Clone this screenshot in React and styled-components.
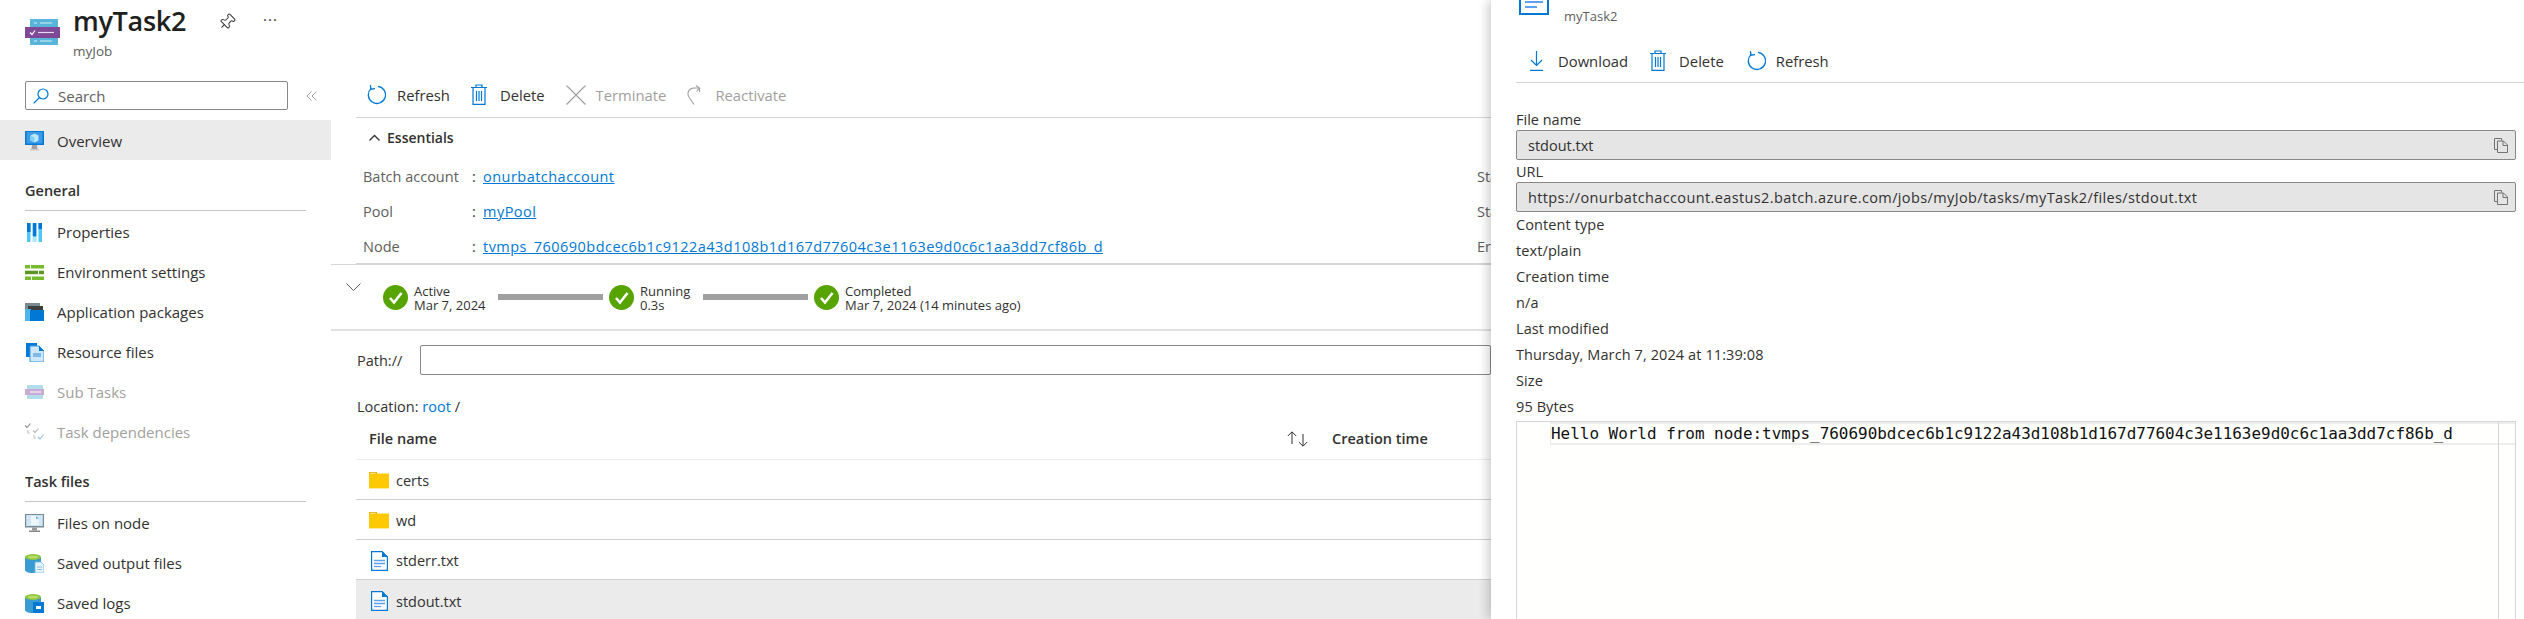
import React from "react";
import styled, { createGlobalStyle } from "styled-components";
import { Pin } from "lucide-react";

const FONT = `"Open Sans", "Noto Sans", Arial, sans-serif`;
const BLUE = "#0078d4";
const TEXT = "#323130";
const MUTED = "#605e5c";
const DISABLED = "#a19f9d";

const Global = createGlobalStyle`
  html, body { margin: 0; padding: 0; width: 2524px; height: 619px; overflow: hidden; background: #fff; }
  body { font-family: ${FONT}; color: ${TEXT}; font-size: 15px; }
  #root { width: 100%; height: 100%; }
  * { box-sizing: border-box; }
`;

const Page = styled.div`display: flex; width: 2524px; height: 619px; overflow: hidden;`;
const Blade = styled.div`flex: 1; min-width: 0; display: flex; flex-direction: column; overflow: hidden;`;
const Header = styled.header`height: 70px; flex: none; display: flex; padding: 0 0 0 25px; align-items: flex-start;`;
const HeaderLogo = styled.div`width: 48px; padding-top: 19px; flex: none;`;
const TitleBlock = styled.div`display: flex; flex-direction: column; width: 145px;`;
const Title = styled.h1`margin: 0; font-size: 27px; line-height: 40px; height: 40px; margin-top: 1px; font-weight: 600; color: #201f1e; white-space: nowrap; letter-spacing: -0.3px;`;
const Subtitle = styled.div`font-size: 13.5px; line-height: 20px; color: ${MUTED};`;
const HeaderAction = styled.div`display: flex; align-items: center; gap: 24px; padding-top: 12px; height: 32px; color: ${TEXT};`;
const Dots = styled.span`font-size: 15px; letter-spacing: 1px; line-height: 20px; margin-top: -6px; margin-left: 3px;`;
const Body = styled.div`flex: 1; display: flex; min-height: 0;`;

const Sidebar = styled.nav`width: 331px; flex: none; display: flex; flex-direction: column;`;
const SearchRow = styled.div`flex: none; display: flex; align-items: center; margin: 11px 0 10px 25px; gap: 18px;`;
const SearchBox = styled.div`width: 263px; height: 29px; border: 1px solid #8a8886; border-radius: 2px; display: flex; align-items: center; padding-left: 7px; gap: 9px; color: ${MUTED}; font-size: 15px;`;
const NavRow = styled.div`
  height: 40px; flex: none; display: flex; align-items: center; padding: ${p => (p.$active ? "1px" : 0)} 0 0 25px; gap: 13px; font-size: 15px; white-space: nowrap;
  background: ${p => (p.$active ? "#ebebeb" : "transparent")};
  color: ${p => (p.$disabled ? DISABLED : TEXT)};
  margin-bottom: ${p => (p.$active ? "1px" : 0)};
`;
const NavIcon = styled.span`width: 19px; height: 20px; display: flex; align-items: center; justify-content: center; flex: none;`;
const SectionHead = styled.div`
  flex: none; margin: 19px 25px 1px 25px; height: 31px; border-bottom: 1px solid #c8c6c4; font-weight: 600; font-size: 14.5px; line-height: 22px; color: ${TEXT};
`;

const Main = styled.main`flex: 1; min-width: 0; display: flex; flex-direction: column; overflow: hidden;`;
const Toolbar = styled.div`
  flex: none; height: 48px; margin-left: 25px; padding-left: 10px; border-bottom: 1px solid #d6d6d6; display: flex; align-items: center; gap: 21px;
  padding-top: 6px; padding-bottom: 4px;
`;
const ToolButton = styled.div`display: flex; align-items: center; gap: ${p => p.$gap ?? 11}px; font-size: 14.8px; color: ${p => (p.$disabled ? DISABLED : TEXT)}; white-space: nowrap;`;
const EssentialsHead = styled.div`flex: none; height: 38px; margin-left: 38px; display: flex; align-items: center; gap: 7px; font-weight: 600; font-size: 14px;`;
const Essentials = styled.div`
  flex: none; margin-left: 25px; height: 108px; border-bottom: 1px solid #d6d6d6; display: grid; grid-template-columns: 1114px 200px; padding: 3px 0 0 7px; grid-auto-rows: 35px;
`;
const Pair = styled.div`display: flex; align-items: center; font-size: 14.5px; color: ${MUTED}; white-space: nowrap;`;
const PairLabel = styled.span`width: 109px; flex: none;`;
const Colon = styled.span`width: 11px; flex: none; color: ${TEXT};`;
const LinkText = styled.a`color: ${BLUE}; text-decoration: underline; letter-spacing: 0.47px;`;
const Stepper = styled.div`flex: none; height: 67px; border-top: 1px solid #d6d6d6; border-bottom: 2px solid #e1e1e1; display: flex; align-items: center; padding-left: 15px;`;
const Chevron = styled.span`width: 37px; margin-top: -20px; display: flex; flex: none;`;
const Step = styled.div`display: flex; align-items: center; gap: 6px;`;
const StepText = styled.div`font-size: 13px; line-height: 14px; margin-top: 2px; color: ${TEXT}; white-space: nowrap; width: ${p => p.$w}px;`;
const Connector = styled.div`width: 105px; height: 6px; background: #a0a0a0; flex: none; margin-right: 6px;`;
const PathRow = styled.div`flex: none; display: flex; align-items: center; margin: 14px 0 0 26px; gap: 18px; font-size: 14.5px;`;
const PathInput = styled.div`flex: 1; height: 30px; border: 1px solid #8a8886; border-radius: 2px;`;
const Location = styled.div`flex: none; margin: 21px 0 0 26px; font-size: 14.5px; line-height: 22px;`;
const RootLink = styled.span`color: ${BLUE};`;
const Table = styled.div`flex: none; margin: 0 0 0 25px; display: flex; flex-direction: column;`;
const TableHead = styled.div`height: 42px; flex: none; display: flex; align-items: center; padding-left: 13px; border-bottom: 1px solid #edebe9; font-weight: 600; font-size: 14.5px;`;
const HeadName = styled.span`flex: 1;`;
const SortBox = styled.span`display: flex; margin-right: 24px;`;
const HeadTime = styled.span`width: 159px; white-space: nowrap;`;
const FileRow = styled.div`
  height: 40px; flex: none; display: flex; align-items: center; gap: 7px; padding: 2px 0 0 13px; font-size: 14.5px;
  border-bottom: ${p => (p.$last ? "none" : "1px solid #d2d0ce")};
  background: ${p => (p.$selected ? "#ebebeb" : "#fff")};
`;
const FileIconBox = styled.span`width: 20px; display: flex; justify-content: center; flex: none;`;

const Panel = styled.aside`
  width: 1033px; flex: none; position: relative; z-index: 2; background: #fff; box-shadow: -3px 0 10px rgba(0,0,0,.2);
  padding: 0 8px 0 25px; display: flex; flex-direction: column;
`;
const PanelHead = styled.div`height: 28px; flex: none; display: flex; align-items: flex-start; padding-left: 3px; gap: 15px;`;
const PanelSub = styled.div`font-size: 13px; line-height: 20px; color: ${MUTED}; margin-top: 6px;`;
const PanelToolbar = styled.div`flex: none; height: 55px; margin-right: -8px; border-bottom: 1px solid #d6d6d6; display: flex; align-items: center; padding: 11px 0 0 14px; gap: 22px;`;
const Label = styled.div`flex: none; font-size: 14.5px; line-height: 20px; padding-top: 2px; height: 22px; white-space: nowrap; margin-top: ${p => p.$top ?? 0}px;`;
const ReadOnly = styled.div`
  height: 30px; flex: none; display: flex; align-items: center; justify-content: space-between; background: #e5e5e5; border: 1px solid #8a8886; border-radius: 2px; padding: 0 7px 0 11px; font-size: 14.5px; letter-spacing: ${p => p.$spacing ?? 0}px;
`;
const Info = styled.div`flex: none; font-size: 14.5px; line-height: 26px; height: 26px; white-space: nowrap; letter-spacing: 0.1px;`;
const Editor = styled.div`
  flex: 1; min-height: 0; margin-top: 1px; position: relative; border: 1px solid #d6d6d6; border-bottom: none; background: #fffffe; padding: 0 0 0 33px;
`;
const CurrentLine = styled.div`
  height: 23px; border: 2px solid #eeeeee; border-right: none; border-left-width: 1px; font-family: "DejaVu Sans Mono", "Liberation Mono", monospace; font-size: 15.94px; line-height: 19px; color: #111; white-space: pre;
`;
const Ruler = styled.div`position: absolute; top: 0; bottom: 0; right: 16px; width: 1px; background: #d4d4d4;`;

const Refresh = ({ c = BLUE }) => (
  <svg width="20" height="21" viewBox="0 0 20 21" fill="none" stroke={c} strokeWidth="1.3">
    <path d="M12 2.3A8.6 8.6 0 1 1 5 4.6" />
    <path d="M4.4 1.2 5 5.2 9 4.6" />
  </svg>
);
const Trash = () => (
  <svg width="16" height="21" viewBox="0 0 16 21" fill="none" stroke={BLUE} strokeWidth="1.2">
    <path d="M0 3.5h16M5 3.5V1h6v2.5M2 3.5v16.8h12V3.5" />
    <path d="M5.5 7v10M8 7v10M10.5 7v10" />
  </svg>
);
const Terminate = () => (
  <svg width="20" height="20" viewBox="0 0 20 20" fill="none" stroke={DISABLED} strokeWidth="1.1"><path d="M0.5 0.5 19.5 19.5M19.5 0.5 0.5 19.5" /></svg>
);
const Reactivate = () => (
  <svg width="15" height="20" viewBox="0 0 15 20" fill="none" stroke={DISABLED} strokeWidth="1.1">
    <path d="M12 3H7C2 3 -0.5 8 2 12L7 19.5" /><path d="M9 0.5 12.5 3 9.5 6.5" /><path d="M12.5 3v4" />
  </svg>
);
const Download = () => (
  <svg width="13" height="20" viewBox="0 0 13 20" fill="none" stroke={BLUE} strokeWidth="1.2">
    <path d="M6.5 0v14M1 9l5.5 5.5L12 9M0 19.4h13" />
  </svg>
);
const Check = () => (
  <svg width="25" height="25" viewBox="0 0 25 25"><circle cx="12.5" cy="12.5" r="12.5" fill="#57a300" /><path d="M7 13l4 4.5 7.5-9.5" fill="none" stroke="#fff" strokeWidth="2.6" /></svg>
);
const Folder = () => (
  <svg width="20" height="17" viewBox="0 0 20 17"><path d="M0 0h8v2H0z" fill="#e6ac00" /><path d="M0 1.5h20V16H0z" fill="#ffc900" /><path d="M0 16h20v1H0z" fill="#ffe89a" /><path d="M1.5 .8h5v1h-5z" fill="#fff2c0" /></svg>
);
const FileDoc = () => (
  <svg width="17" height="20" viewBox="0 0 17 20" fill="none">
    <path d="M.6.6H11L16.4 6v13.4H.6z" fill="#fff" stroke={BLUE} strokeWidth="1.2" />
    <path d="M11 0l6 6h-6z" fill={BLUE} />
    <path d="M3 9.5h11M3 12.5h11" stroke="#5ea0ef" strokeWidth="1.3" /><path d="M3 15.5h7" stroke="#5ea0ef" strokeWidth="1.3" />
  </svg>
);
const Copy = () => (
  <svg width="14" height="15" viewBox="0 0 14 15" fill="none" stroke="#737373" strokeWidth="1"><path d="M3.5 11.5H.5V.5h7v2" /><path d="M3.5 3h6l4 4v7.5h-10z" /><path d="M9 3v4.5h4.5" /></svg>
);
const Collapse = () => (
  <svg width="11" height="10" viewBox="0 0 11 10" fill="none" stroke={DISABLED} strokeWidth="1"><path d="M5.5.5 1 5l4.5 4.5M10.5.5 6 5l4.5 4.5" /></svg>
);
const Magnifier = () => (
  <svg width="16" height="16" viewBox="0 0 16 16" fill="none" stroke={BLUE} strokeWidth="1.2"><circle cx="10" cy="6" r="5" /><path d="M6.5 9.5.6 15.4" /></svg>
);
const ChevronDown = () => (
  <svg width="15" height="9" viewBox="0 0 15 9" fill="none" stroke={MUTED} strokeWidth="1"><path d="M.5.5l7 7 7-7" /></svg>
);
const ChevronUp = () => (
  <svg width="11" height="7" viewBox="0 0 11 7" fill="none" stroke={TEXT} strokeWidth="1.3"><path d="M.5 6.5l5-5 5 5" /></svg>
);
const Sort = () => (
  <svg width="21" height="16" viewBox="0 0 21 16" fill="none" stroke={TEXT} strokeWidth="1"><path d="M5 13V1M.8 5 5 .8 9.2 5M16 3v12M11.8 11l4.2 4.2 4.2-4.2" /></svg>
);
const TaskStack = () => (
  <svg width="35" height="26" viewBox="0 0 35 26">
    <rect x="5" y="0" width="28" height="8" fill="#59b4d9" /><rect x="5" y="18" width="28" height="8" fill="#59b4d9" />
    <rect x="0" y="8" width="35" height="11" fill="#804998" />
    <path d="M9 4h3M15 4h12M9 22h3M15 22h12" stroke="#d5f0fa" strokeWidth="1" />
    <path d="M5 13.5l2 2 3-4" stroke="#fff" strokeWidth="1.2" fill="none" /><path d="M13 13.5h16" stroke="#e6d8ee" strokeWidth="1.2" />
  </svg>
);
const TaskSmall = () => (
  <svg width="19" height="14" viewBox="0 0 19 14" opacity="0.45"><rect x="2" y="0" width="16" height="4" fill="#59b4d9" /><rect x="2" y="10" width="16" height="4" fill="#59b4d9" /><rect x="0" y="4" width="19" height="6" fill="#804998" /><path d="M5 7h11" stroke="#fff" strokeWidth="1" /></svg>
);
const Overview = () => (
  <svg width="19" height="20" viewBox="0 0 19 20">
    <rect x="0" y="0" width="19" height="14" rx=".5" fill="#0078d4" /><rect x="1.5" y="1" width="16" height="11.5" fill="#3a9be8" />
    <path d="M9.5 2.5l4 2v5l-4 2-4-2v-5z" fill="#bfe6fb" /><path d="M9.5 6.5v5l-4-2v-5z" fill="#7fd0f5" />
    <path d="M7 14h5l.5 4h-6z" fill="#a0a1a2" /><rect x="5" y="18" width="9" height="1.5" fill="#c9c9c9" />
  </svg>
);
const Properties = () => (
  <svg width="15" height="19" viewBox="0 0 15 19">
    <rect x="0" width="3.5" height="19" fill="#50c7f7" /><rect x="0" width="3.5" height="9" fill="#0078d4" />
    <rect x="5.8" width="3.5" height="19" fill="#50c7f7" /><rect x="5.8" width="3.5" height="13" fill="#0078d4" /><rect x="5.8" y="14" width="3.5" height="5" fill="#b3e7fc" />
    <rect x="11.5" width="3.5" height="19" fill="#50c7f7" /><rect x="11.5" width="3.5" height="6" fill="#0078d4" />
  </svg>
);
const EnvSettings = () => (
  <svg width="19" height="15" viewBox="0 0 19 15">
    <rect width="19" height="3.5" fill="#76bc2d" /><rect y="5.7" width="19" height="3.5" fill="#5e9624" /><rect y="11.5" width="19" height="3.5" fill="#76bc2d" />
    <rect x="5" y="0" width="1" height="3.5" fill="#fff" /><rect x="13" y="5.7" width="1" height="3.5" fill="#fff" /><rect x="6" y="11.5" width="1" height="3.5" fill="#fff" />
  </svg>
);
const AppPackages = () => (
  <svg width="19" height="18" viewBox="0 0 19 18">
    <rect x="0" y="0" width="15" height="6" fill="#7a8a93" /><rect x="3" y="3" width="15" height="5" fill="#3e3e3e" />
    <path d="M0 6h6v12H0z" fill="#50b4e8" /><path d="M5 7h14v11H5z" fill="#0078d4" />
  </svg>
);
const ResourceFiles = () => (
  <svg width="18" height="19" viewBox="0 0 18 19">
    <path d="M0 0h11v14H0z" fill="#0078d4" /><path d="M4 3h9l5 5v11H4z" fill="#cfe7fa" stroke="#3a9be8" strokeWidth="1" />
    <path d="M13 2.5 18 8h-5z" fill="#0078d4" /><rect x="7" y="10" width="8" height="4" fill="#7fb9ea" />
  </svg>
);
const TaskDeps = () => (
  <svg width="19" height="18" viewBox="0 0 19 18" fill="none" strokeWidth="1.1">
    <path d="M0 2.5 2 4.5 5.5 .5" stroke="#8a8886" /><path d="M8 7.5l2 2 3.5-4" stroke="#b3b0ad" /><path d="M13 14l2 2 3.5-4.5" stroke="#8cc4ee" />
    <path d="M3 7v3h2M9 12v3h2" stroke="#c8c6c4" />
  </svg>
);
const FilesNode = () => (
  <svg width="19" height="18" viewBox="0 0 19 18">
    <rect width="19" height="13.5" fill="#7a8a93" /><rect x="1.2" y="1" width="16.6" height="11" fill="#cfe7f5" />
    <path d="M6 2h5l3 3v6H6z" fill="#eef6fb" /><path d="M11 2l3 3h-3z" fill="#6fb8e0" />
    <path d="M7 13.5h5v3H7z" fill="#9a9a9a" /><rect x="4" y="16.5" width="11" height="1.5" fill="#8a8886" />
  </svg>
);
const Cylinder = ({ children }) => (
  <svg width="19" height="19" viewBox="0 0 19 19">
    <path d="M0 3v13c0 1.5 3 3 7 3s9-1 9-3V3z" fill="#3a9bd0" /><ellipse cx="8" cy="3" rx="8" ry="3" fill="#8cc63f" /><ellipse cx="8" cy="3" rx="5" ry="1.5" fill="#b7dc6a" />
    {children}
  </svg>
);

const navTop = [
  ["Properties", <Properties />], ["Environment settings", <EnvSettings />], ["Application packages", <AppPackages />], ["Resource files", <ResourceFiles />],
  ["Sub Tasks", <TaskSmall />, true], ["Task dependencies", <TaskDeps />, true],
];
const navFiles = [
  ["Files on node", <FilesNode />],
  ["Saved output files", <Cylinder><path d="M10 8h6l3 3v8H10z" fill="#e6f3fb" stroke="#6fb8e0" strokeWidth=".8" /><path d="M12 13h5M12 15.5h5" stroke="#6fb8e0" strokeWidth=".8" /></Cylinder>],
  ["Saved logs", <Cylinder><rect x="8" y="8" width="11" height="11" fill="#0078d4" /><rect x="11" y="12" width="5" height="3" fill="#fff" /></Cylinder>],
];
const files = [["certs", <Folder />], ["wd", <Folder />], ["stderr.txt", <FileDoc />], ["stdout.txt", <FileDoc />, true]];
const info = ["text/plain", "Creation time", "n/a", "Last modified", "Thursday, March 7, 2024 at 11:39:08", "Size", "95 Bytes"];

const NavItem = ({ label, icon, disabled, active }) => (
  <NavRow $disabled={disabled} $active={active}><NavIcon>{icon}</NavIcon>{label}</NavRow>
);

const PinIcon = styled(Pin)`transform: rotate(45deg);`;

export default function App() {
  return (
    <Page>
      <Global />
      <Blade>
        <Header>
          <HeaderLogo><TaskStack /></HeaderLogo>
          <TitleBlock><Title>myTask2</Title><Subtitle>myJob</Subtitle></TitleBlock>
          <HeaderAction>
            <PinIcon size={18} strokeWidth={1.3} />
            <Dots>···</Dots>
          </HeaderAction>
        </Header>
        <Body>
          <Sidebar>
            <SearchRow><SearchBox><Magnifier />Search</SearchBox><Collapse /></SearchRow>
            <NavItem label="Overview" icon={<Overview />} active />
            <SectionHead>General</SectionHead>
            {navTop.map(([l, i, d]) => <NavItem key={l} label={l} icon={i} disabled={d} />)}
            <SectionHead>Task files</SectionHead>
            {navFiles.map(([l, i]) => <NavItem key={l} label={l} icon={i} />)}
          </Sidebar>
          <Main>
            <Toolbar>
              <ToolButton><Refresh />Refresh</ToolButton>
              <ToolButton $gap={13}><Trash />Delete</ToolButton>
              <ToolButton $gap={10} $disabled><Terminate />Terminate</ToolButton>
              <ToolButton $gap={13} $disabled><Reactivate />Reactivate</ToolButton>
            </Toolbar>
            <EssentialsHead><ChevronUp />Essentials</EssentialsHead>
            <Essentials>
              <Pair><PairLabel>Batch account</PairLabel><Colon>:</Colon><LinkText>onurbatchaccount</LinkText></Pair>
              <Pair>State</Pair>
              <Pair><PairLabel>Pool</PairLabel><Colon>:</Colon><LinkText>myPool</LinkText></Pair>
              <Pair>Start time</Pair>
              <Pair><PairLabel>Node</PairLabel><Colon>:</Colon><LinkText>tvmps_760690bdcec6b1c9122a43d108b1d167d77604c3e1163e9d0c6c1aa3dd7cf86b_d</LinkText></Pair>
              <Pair>Error</Pair>
            </Essentials>
            <Stepper>
              <Chevron><ChevronDown /></Chevron>
              <Step><Check /><StepText $w={84}>Active<br />Mar 7, 2024</StepText></Step>
              <Connector />
              <Step><Check /><StepText $w={63}>Running<br />0.3s</StepText></Step>
              <Connector />
              <Step><Check /><StepText $w={180}>Completed<br />Mar 7, 2024 (14 minutes ago)</StepText></Step>
            </Stepper>
            <PathRow>Path://<PathInput /></PathRow>
            <Location>Location: <RootLink>root</RootLink> /</Location>
            <Table>
              <TableHead><HeadName>File name</HeadName><SortBox><Sort /></SortBox><HeadTime>Creation time</HeadTime></TableHead>
              {files.map(([n, i, s]) => (
                <FileRow key={n} $selected={s} $last={s}><FileIconBox>{i}</FileIconBox>{n}</FileRow>
              ))}
            </Table>
          </Main>
        </Body>
      </Blade>
      <Panel>
        <PanelHead>
          <svg width="30" height="15" viewBox="0 0 30 15" fill="none">
            <path d="M1 0v14h28V0" stroke={BLUE} strokeWidth="2" />
            <path d="M6 2h18" stroke="#5ea0ef" strokeWidth="2" /><path d="M6 7h12" stroke="#5ea0ef" strokeWidth="2" />
          </svg>
          <PanelSub>myTask2</PanelSub>
        </PanelHead>
        <PanelToolbar>
          <ToolButton $gap={15}><Download />Download</ToolButton>
          <ToolButton $gap={13}><Trash />Delete</ToolButton>
          <ToolButton $gap={10}><Refresh />Refresh</ToolButton>
        </PanelToolbar>
        <Label $top={25}>File name</Label>
        <ReadOnly>stdout.txt<Copy /></ReadOnly>
        <Label>URL</Label>
        <ReadOnly $spacing={0.38}>https://onurbatchaccount.eastus2.batch.azure.com/jobs/myJob/tasks/myTask2/files/stdout.txt<Copy /></ReadOnly>
        <Info>Content type</Info>
        {info.map(t => <Info key={t}>{t}</Info>)}
        <Editor>
          <CurrentLine>Hello World from node:tvmps_760690bdcec6b1c9122a43d108b1d167d77604c3e1163e9d0c6c1aa3dd7cf86b_d</CurrentLine>
          <Ruler />
        </Editor>
      </Panel>
    </Page>
  );
}
